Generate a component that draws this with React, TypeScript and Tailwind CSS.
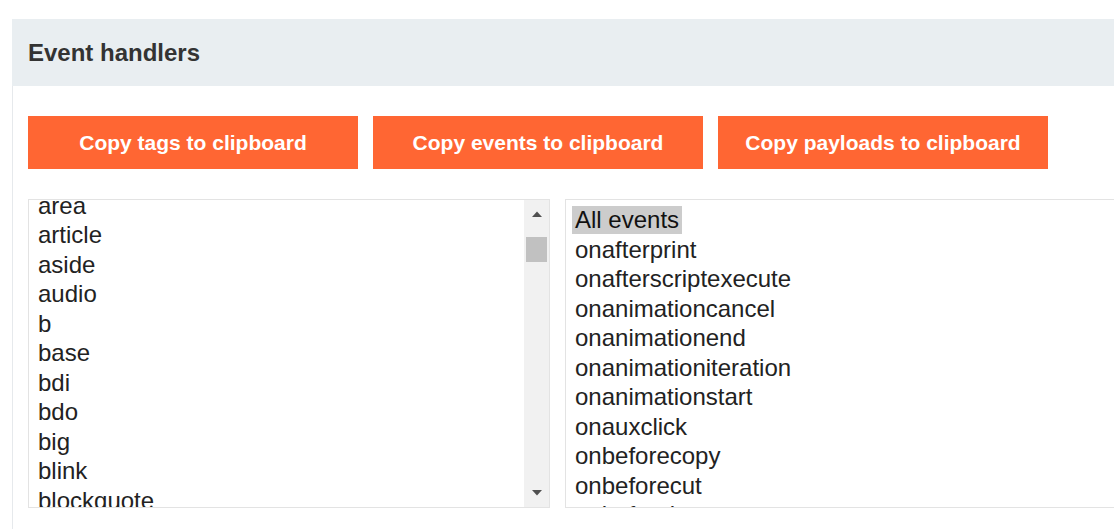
import React from 'react';

const tags = [
  'area',
  'article',
  'aside',
  'audio',
  'b',
  'base',
  'bdi',
  'bdo',
  'big',
  'blink',
  'blockquote',
  'body',
  'br',
];

const events = [
  'All events',
  'onafterprint',
  'onafterscriptexecute',
  'onanimationcancel',
  'onanimationend',
  'onanimationiteration',
  'onanimationstart',
  'onauxclick',
  'onbeforecopy',
  'onbeforecut',
  'onbeforeinput',
  'onbeforematch',
];

const buttons = ['Copy tags to clipboard', 'Copy events to clipboard', 'Copy payloads to clipboard'];

function ListItem({ label, selected = false }: { label: string; selected?: boolean }) {
  return (
    <div className="h-[29.5px] whitespace-nowrap">
      <span
        className={`inline-block h-[28px] leading-[28px] px-[3px] ${selected ? 'bg-[#cccccc] text-[#111]' : ''}`}
      >
        {label}
      </span>
    </div>
  );
}

function Scrollbar() {
  return (
    <div className="w-[25px] shrink-0 bg-[#f1f1f1] flex flex-col items-center">
      <svg width="12" height="8" viewBox="0 0 12 8" className="mt-[10px]">
        <path d="M1 7 L6 1.5 L11 7 Z" fill="#505050" />
      </svg>
      <div className="mt-[19px] w-[21px] h-[25px] bg-[#c1c1c1]" />
      <div className="flex-1" />
      <svg width="12" height="8" viewBox="0 0 12 8" className="mb-[10px]">
        <path d="M1 1 L6 6.5 L11 1 Z" fill="#505050" />
      </svg>
    </div>
  );
}

export default function App() {
  return (
    <div className="w-[1114px] h-[529px] overflow-hidden bg-white font-['Liberation_Sans',Arial,sans-serif]">
      <div className="pt-[19px] pl-[12px]">
        <div className="w-[1150px]">
          {/* Header */}
          <div className="h-[67px] bg-[#e9eef1] flex items-center pl-[16px]">
            <h2 className="text-[24px] font-bold text-[#333333] leading-none">Event handlers</h2>
          </div>

          {/* Body */}
          <div className="border-l border-[#e6e9ec] pl-[15px] pt-[30px] pb-[40px]">
            <div className="flex gap-[15px]">
              {buttons.map((b) => (
                <button
                  key={b}
                  className="w-[330px] h-[53px] bg-[#ff6633] text-white text-[21px] font-bold flex items-center justify-center"
                >
                  {b}
                </button>
              ))}
            </div>

            <div className="flex gap-[15px] mt-[30px]">
              {/* Tags list */}
              <div className="w-[522px] h-[309px] border border-[#e3e3e3] flex overflow-hidden">
                <div className="flex-1 overflow-hidden text-[24px] text-[#222222] px-[6px]">
                  <div className="mt-[-12.5px]">
                    {tags.map((t) => (
                      <ListItem key={t} label={t} />
                    ))}
                  </div>
                </div>
                <Scrollbar />
              </div>

              {/* Events list */}
              <div className="w-[560px] h-[309px] border border-[#e3e3e3] overflow-hidden text-[24px] text-[#222222] px-[6px] pt-[2px]">
                {events.map((e, i) => (
                  <ListItem key={e} label={e} selected={i === 0} />
                ))}
              </div>
            </div>
          </div>
        </div>
      </div>
    </div>
  );
}
